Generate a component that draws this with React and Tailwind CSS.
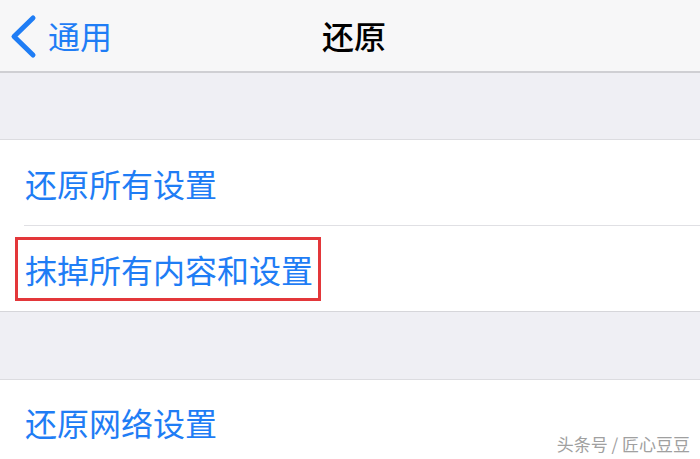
export default function App() {
  const cjk = { fontFamily: '"Noto Sans CJK SC", "Noto Sans", sans-serif' };

  return (
    <div className="relative w-[700px] h-[459px] overflow-hidden bg-[#efeff4]" style={cjk}>
      {/* nav bar */}
      <div className="grid grid-cols-[1fr_auto_1fr] items-center h-[73px] bg-[#f7f7f8] border-b-2 border-[#cfcfd3]">
        <div className="flex items-center">
          <svg width="48" height="62" viewBox="0 0 48 62" className="shrink-0">
            <polyline
              points="33,13 14,31.5 33,50"
              fill="none"
              stroke="#1f7df5"
              strokeWidth="5"
              strokeLinecap="round"
              strokeLinejoin="round"
            />
          </svg>
          <span className="text-[32px] leading-none text-[#1f7df5] -mt-[2px]">通用</span>
        </div>
        <div className="pl-2 text-[32px] leading-none font-medium text-black -mt-[2px]">还原</div>
        <div />
      </div>

      {/* spacer */}
      <div className="h-[67px] border-b border-[#dcdce0]" />

      {/* group 1 */}
      <div className="bg-white border-b border-[#d6d6da]">
        <div className="flex items-center h-[85px] pl-[25px] text-[32px] leading-none text-[#1f7df5]">
          还原所有设置
        </div>
        <div className="ml-[24px] h-px bg-[#e0e0e4]" />
        <div className="flex items-center h-[85px] pl-[15px]">
          <div className="flex items-center h-[64px] w-[306px] pl-[7px] border-[3px] border-[#e3373a] text-[32px] leading-none text-[#1f7df5]">
            抹掉所有内容和设置
          </div>
        </div>
      </div>

      {/* spacer */}
      <div className="h-[68px] border-b border-[#dcdce0]" />

      {/* group 2 */}
      <div className="bg-white h-[90px]">
        <div className="flex items-center h-[84px] pl-[25px] text-[32px] leading-none text-[#1f7df5]">
          还原网络设置
        </div>
      </div>

      {/* watermark */}
      <div className="absolute right-[10px] bottom-[7px] text-[17px] leading-none text-[#a0a0a0]">
        头条号 / 匠心豆豆
      </div>
    </div>
  );
}
